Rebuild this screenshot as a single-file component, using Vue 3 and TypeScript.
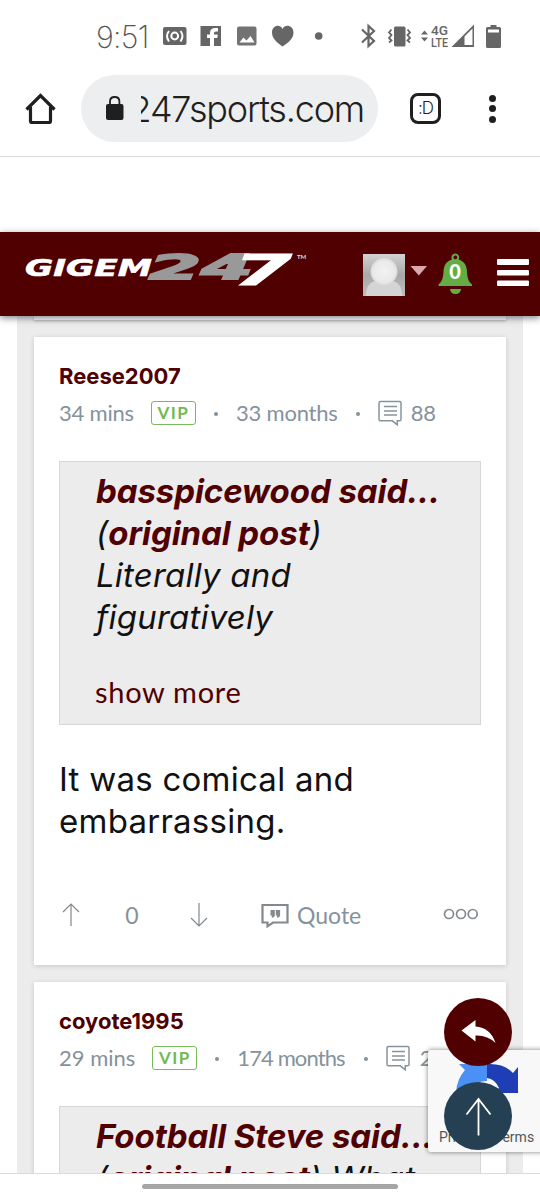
<script setup lang="ts">
interface QuoteLine {
  pre: string
  strong: string
  post: string
}
interface Post {
  id: number
  author: string
  age: string
  tenure: string
  count: string
  quote: QuoteLine[]
  body: string[]
}

const posts: Post[] = [
  {
    id: 1,
    author: 'Reese2007',
    age: '34 mins',
    tenure: '33 months',
    count: '88',
    quote: [
      { pre: '', strong: 'basspicewood said...', post: '' },
      { pre: '(', strong: 'original post', post: ')' },
      { pre: 'Literally and', strong: '', post: '' },
      { pre: 'figuratively', strong: '', post: '' },
    ],
    body: ['It was comical and', 'embarrassing.'],
  },
  {
    id: 2,
    author: 'coyote1995',
    age: '29 mins',
    tenure: '174 months',
    count: '29',
    quote: [
      { pre: '', strong: 'Football Steve said...', post: '' },
      { pre: '(', strong: 'original post', post: ') What' },
    ],
    body: [],
  },
]
</script>

<template>
  <div class="phone">
    <div class="status">
      <span class="clock">9:51</span>
      <svg class="status-icons" width="444" height="72" viewBox="96 0 444 72" fill="#666">
        <rect x="163" y="27" width="23.500" height="18" rx="2" />
        <g fill="none" stroke="#fff" stroke-width="2">
          <circle cx="174.700" cy="36" r="3.400" />
          <path d="M169 31q-4 5 0 10.500M180.500 31q4 5 0 10.500" />
        </g>
        <rect x="200.500" y="26" width="20.500" height="20" />
        <path d="M210 46v-8h-3v-3.500h3v-1.500q0-5 5.500-5h2.500v3.500h-2q-2 0-2 1.500v1.500h3.800l-.5 3.500h-3.300v8z" fill="#fff" />
        <rect x="237" y="26.500" width="19.500" height="19" rx="2" fill="#737373" />
        <path d="M239.500 42.500l4-5 3 3 4-4.500 4 6.500z" fill="#fff" />
        <path d="M282.500 46.500C277 42.500 272 38.500 272 32.500c0-7 8-9 10.500-3.500 2.500-5.500 11-3.500 11 3.500 0 6-5 10-11 14z" />
        <circle cx="318.700" cy="36" r="3.800" />
        <path d="M362 29.500l12 11.500-5.500 5V26l5.500 5-12 11.500" fill="none" stroke="#666" stroke-width="2.200" />
        <rect x="394" y="26.500" width="11.500" height="20" rx="1.500" />
        <path d="M391.500 29.500l-2.500 3 2.500 2.500-2.500 3 2.500 2.500-2.500 2M407.500 29.500l2.500 3-2.500 2.500 2.500 3-2.500 2.500 2.500 2" fill="none" stroke="#666" stroke-width="1.800" />
        <path d="M421 34.500l3.500-4 3.500 4zM421 37.500l3.500 4 3.500-4z" />
        <text x="431" y="34.500" class="net" textLength="17" lengthAdjust="spacingAndGlyphs">4G</text>
        <text x="431" y="46.500" class="net" textLength="17" lengthAdjust="spacingAndGlyphs">LTE</text>
        <path d="M451.500 47L474 24.500v22.500zM464.500 36.500v8.500H472.500V28.500z" fill-rule="evenodd" />
        <path d="M490.500 25h6v2h3q1.500 0 1.500 1.500v18q0 1.500-1.500 1.500h-12q-1.500 0-1.500-1.500v-18q0-1.500 1.500-1.500h3zM488 29.500v3h11v-3z" fill-rule="evenodd" />
      </svg>
    </div>

    <div class="toolbar">
      <svg class="home" width="34" height="36" viewBox="24 91 34 36" fill="none" stroke="#1f1f1f" stroke-width="3.200">
        <path d="M30.500 107v14q0 1.500 1.500 1.500h17q1.500 0 1.500-1.500v-14M26.500 109.500L40.500 95.500l14 14" />
      </svg>
      <div class="omnibox">
        <svg width="20" height="26" viewBox="105 96 20 26">
          <rect x="106" y="104" width="17.500" height="16" rx="2" fill="#1f1f1f" />
          <path d="M110 105v-3.500q0-4.500 4.700-4.500t4.700 4.500v3.500" fill="none" stroke="#1f1f1f" stroke-width="1.800" />
        </svg>
        <div class="url"><span>247sports.com</span></div>
      </div>
      <div class="tabs">:D</div>
      <div class="dots"><i></i><i></i><i></i></div>
    </div>

    <div class="blank"></div>

    <header class="site">
      <svg class="logo" width="300" height="84" viewBox="20 232 300 84">
        <text x="25" y="276" class="l1" textLength="127" lengthAdjust="spacingAndGlyphs">GIGEM</text>
        <text x="149" y="279" class="l2" textLength="104" lengthAdjust="spacingAndGlyphs">24</text>
        <text x="233" y="284.500" class="l3" textLength="59" lengthAdjust="spacingAndGlyphs">7</text>
        <text x="297" y="259" class="tm">TM</text>
      </svg>
      <svg class="tools" width="177" height="84" viewBox="363 232 177 84">
        <defs>
          <linearGradient id="avbg" x1="0" y1="0" x2="0" y2="1">
            <stop offset="0" stop-color="#d2d2d2" /><stop offset=".5" stop-color="#a9a9a9" /><stop offset="1" stop-color="#bdbdbd" />
          </linearGradient>
          <radialGradient id="avhd"><stop offset="0" stop-color="#f2f2f2" /><stop offset=".8" stop-color="#e9e9e9" /><stop offset="1" stop-color="#dadada" /></radialGradient>
        </defs>
        <rect x="363" y="254" width="42" height="42" fill="url(#avbg)" />
        <path d="M365.500 296q1-13 9-15h19q8 2 9 15z" fill="#d4d4d4" />
        <circle cx="384" cy="271.500" r="13.500" fill="url(#avhd)" />
        <path d="M410.500 266h16.500l-8.200 9.500z" fill="#dba9ad" />
        <path fill="#64ad45" fill-rule="evenodd" d="M455.300 253.500a4 4 0 0 1 3.300 6c6 2 8 6 8.400 12 .4 7 1.500 10 5 13v1.500h-33.500v-1.500c3.500-3 4.600-6 5-13 .4-6 2.400-10 8.500-12a4 4 0 0 1 3.300-6zM455.300 255.500a1.900 1.900 0 1 0 .1 0z" />
        <path d="M450 289h11q-.5 5-5.500 5t-5.500-5z" fill="#64ad45" />
        <text x="455" y="279" class="zero">0</text>
        <g fill="#fff">
          <rect x="497" y="259" width="32" height="6" rx="1" />
          <rect x="497" y="270" width="32" height="5.500" rx="1" />
          <rect x="497" y="280.500" width="32" height="5.500" rx="1" />
        </g>
      </svg>
    </header>

    <main class="feed">
      <div class="prev"></div>
      <article v-for="p in posts" :key="p.id" class="card" :class="'card-' + p.id">
        <div class="author">{{ p.author }}</div>
        <div class="meta">
          <span class="age">{{ p.age }}</span>
          <span class="vip">VIP</span>
          <i class="dot"></i>
          <span class="tenure">{{ p.tenure }}</span>
          <i class="dot"></i>
          <svg width="25" height="26" viewBox="0 0 25 26" fill="none" stroke="#87949b" stroke-width="1.500">
            <path d="M2.500 1.500h19q1.500 0 1.500 1.500v16.500q0 1.300-1.500 1.300h-2.200v4l-5-4h-12q-1.300 0-1.300-1.300v-16.500q0-1.500 1.500-1.500zM6 6.500h13M6 11h13M6 15h13" />
          </svg>
          <span class="count">{{ p.count }}</span>
        </div>
        <blockquote class="quote">
          <div v-for="(l, i) in p.quote" :key="i" class="line">{{ l.pre }}<b v-if="l.strong">{{ l.strong }}</b>{{ l.post }}</div>
          <div v-if="p.body.length" class="more">show more</div>
        </blockquote>
        <div v-if="p.body.length" class="body">
          <div v-for="b in p.body" :key="b">{{ b }}</div>
        </div>
        <div v-if="p.body.length" class="actions">
          <svg width="20" height="26" viewBox="0 0 20 26"><path d="M10 24V2M2 10L10 2l8 8" /></svg>
          <span class="score">0</span>
          <svg width="20" height="26" viewBox="0 0 20 26"><path d="M10 1v23M2 16l8 8 8-8" /></svg>
          <svg class="qicon" width="28" height="26" viewBox="0 0 28 26">
            <path class="thick" d="M1.500 3h25v17.500H12l-5.500 3.800v-3.800h-5z" />
            <path class="marks" d="M9.500 8h4.300v5q0 2.500-3 2.700v-2.200h-1.300zM14.800 8h4.300v5q0 2.500-3 2.700v-2.200h-1.300z" />
          </svg>
          <span class="qtext">Quote</span>
          <svg class="ooo" width="36" height="14" viewBox="0 0 36 14">
            <circle cx="6" cy="7" r="4.500" /><circle cx="18" cy="7" r="4.500" /><circle cx="29.700" cy="7" r="4.500" />
          </svg>
        </div>
      </article>
    </main>

    <div class="captcha">
      <svg width="112" height="60" viewBox="428 1050 112 60">
        <path d="M487 1064v17q-7 0-9 3l6 8h-28q1-13 9-22l-6-6z" fill="#4b90f5" />
        <path d="M487 1064q17-1 26 9l5-6v26h-24l5-5q-4-9-12-10z" fill="#1f3db5" />
      </svg>
      <span>Privacy - Terms</span>
    </div>
    <div class="fab reply">
      <svg width="68" height="68" viewBox="0 0 68 68"><path d="M17.500 32.500L31.500 22v6.500q15 1 20 16.500-8-8-20-7.500V43.500z" fill="#fff" /></svg>
    </div>
    <div class="fab top">
      <svg width="68" height="68" viewBox="0 0 68 68" fill="none" stroke="#fff" stroke-width="1.800"><path d="M34.500 53.500V17M22.500 32.500L34.500 17l12 15.500" /></svg>
    </div>

    <div class="navbar"><i></i></div>
  </div>
</template>

<style>
body { margin: 0; background: #fff; }
</style>

<style scoped>
.phone {
  position: relative;
  width: 540px;
  height: 1200px;
  overflow: hidden;
  display: flex;
  flex-direction: column;
  background: #fff;
  font-family: Lato, "Open Sans", sans-serif;
  font-variant-ligatures: none;
  white-space: nowrap;
}
svg { display: block; flex: none; }
.status { height: 72px; display: flex; flex: none; padding-left: 96px; }
.clock {
  width: 0;
  font: 200 30.500px/74px Inter, sans-serif;
  letter-spacing: -0.700px;
  color: #555;
}
.net { font: 500 12.500px Roboto, sans-serif; }
.toolbar {
  height: 85px;
  flex: none;
  display: flex;
  align-items: center;
  border-bottom: 1px solid #dcdcdc;
  box-sizing: border-box;
  padding: 0 0 11px 24px;
}
.omnibox {
  margin-left: 23px;
  width: 297px;
  height: 67px;
  border-radius: 34px;
  background: #edeef0;
  display: flex;
  align-items: center;
  box-sizing: border-box;
  padding-left: 24px;
}
.url {
  margin-left: 16px;
  width: 223px;
  height: 60px;
  overflow: hidden;
  display: flex;
  justify-content: flex-end;
  font: 300 36px/61px Inter, sans-serif;
  letter-spacing: -1.200px;
  color: #1f1f1f;
}
.tabs {
  margin-left: 32px;
  width: 31px;
  height: 31px;
  border: 3px solid #1f1f1f;
  border-radius: 8px;
  box-sizing: border-box;
  font: 300 17px/25px Inter, sans-serif;
  letter-spacing: -1px;
  text-align: center;
  color: #1f1f1f;
}
.dots { margin-left: 48px; display: flex; flex-direction: column; gap: 3.500px; }
.dots i { width: 7px; height: 7px; border-radius: 50%; background: #1f1f1f; }
.blank { height: 75px; flex: none; }
.site {
  position: relative;
  z-index: 2;
  height: 84px;
  flex: none;
  background: #500000;
  box-shadow: 0 2px 7px rgba(40, 50, 60, 0.6);
  display: flex;
  justify-content: space-between;
  padding-left: 20px;
}
.l1, .l2, .l3 { font-family: "DejaVu Sans", sans-serif; font-weight: 700; font-style: oblique; }
.l1 { font-size: 23.500px; fill: #fff; stroke: #fff; stroke-width: 0.600; }
.l2 { font-size: 34px; fill: #999; stroke: #999; stroke-width: 1.800; }
.l3 { font-size: 42px; fill: #fff; stroke: #fff; stroke-width: 0.800; }
.tm { font: 700 6px Lato, sans-serif; fill: #ddd; }
.zero { font: 900 20px Lato, sans-serif; fill: #fff; text-anchor: middle; }
.feed {
  flex: 1;
  min-height: 0;
  overflow: hidden;
  margin: 0 17px;
  padding: 0 17px;
  background: #ececec;
}
.prev { height: 4px; background: #fff; margin-bottom: 17px; box-shadow: 0 1px 3px rgba(0, 0, 0, 0.25); }
.card {
  height: 628px;
  margin-bottom: 17px;
  padding: 0 25px;
  box-sizing: border-box;
  background: #fff;
  box-shadow: 0 1px 5px rgba(0, 0, 0, 0.16);
  overflow: hidden;
}
.author {
  padding-top: 24px;
  height: 30px;
  font: 700 22px/30px Inter, sans-serif;
  letter-spacing: 0;
  color: #500000;
}
.meta {
  margin-top: 9px;
  height: 26px;
  display: flex;
  align-items: center;
  font-size: 22px;
  line-height: 26px;
  letter-spacing: -0.200px;
  color: #84929c;
}
.vip {
  margin-left: 17px;
  width: 45px;
  height: 24px;
  border: 1.500px solid #79bb58;
  border-radius: 3px;
  box-sizing: border-box;
  font-size: 17px;
  line-height: 21px;
  font-weight: 700;
  letter-spacing: 1.500px;
  text-align: center;
  color: #72b951;
}
.card-2 .age { letter-spacing: 0; }
.card-2 .tenure { letter-spacing: -0.900px; }
.card-2 .count { margin-left: 1px; }
.card-2 .tenure + .dot { margin-left: 19px; }
.dot { width: 4px; height: 4px; border-radius: 50%; background: #84929c; margin: 2px 18px 0; }
.meta svg { margin-right: 8px; }
.quote {
  margin: 35px 0 0;
  height: 264px;
  border: 1px solid #d7d7d7;
  background: #ececec;
  box-sizing: border-box;
  padding: 8px 0 0 36px;
  font: italic 400 33px/42px Inter, sans-serif;
  letter-spacing: 0.200px;
  color: #111;
}
.quote b { font-weight: 700; letter-spacing: -0.080px; color: #500000; }
.more {
  margin-top: 34px;
  margin-left: -1px;
  font: normal 400 29px/40px Lato, sans-serif;
  letter-spacing: 0.700px;
  color: #500000;
}
.body { margin-top: 33px; font: 400 33px/42px Inter, sans-serif; letter-spacing: 0.250px; color: #111; }
.actions { margin-top: 60px; height: 26px; display: flex; align-items: center; padding-left: 2px; font-size: 23px; color: #84929c; }
.actions path, .actions circle { fill: none; stroke: #84898e; stroke-width: 1.200; }
.actions .thick { stroke-width: 2.200; }
.actions .marks { fill: #84898e; stroke: none; }
.actions circle { stroke-width: 1.700; }
.score { width: 20px; margin: 0 47px 0 41px; text-align: center; }
.qicon { margin-left: 52px; }
.qtext { margin-left: 8px; }
.ooo { margin: 0 2px 3px auto; }
.captcha {
  position: absolute;
  left: 428px;
  top: 1050px;
  width: 120px;
  height: 102px;
  background: #f8f8f8;
  border-radius: 3px;
  box-shadow: 0 0 5px rgba(0, 0, 0, 0.5);
}
.captcha span { display: block; margin: 17px 0 0 11px; font: 400 14px/20px Roboto, sans-serif; color: #555; }
.fab { position: absolute; width: 68px; height: 68px; border-radius: 50%; }
.reply { left: 444px; top: 998px; background: #500000; }
.top { left: 444px; top: 1082px; background: #254052; }
.navbar {
  height: 27px;
  flex: none;
  box-sizing: border-box;
  border-top: 1px solid #dadada;
  background: #fff;
  display: flex;
  justify-content: center;
  padding-top: 10px;
}
.navbar i { width: 256px; height: 5px; border-radius: 3px; background: #a6a6a6; }
</style>
